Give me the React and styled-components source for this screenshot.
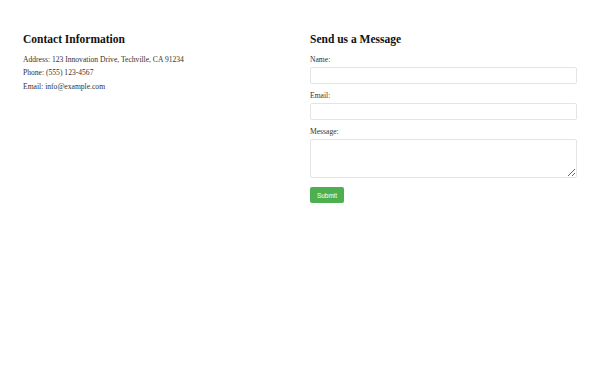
import React from "react";
import styled, { createGlobalStyle } from "styled-components";

const GlobalStyle = createGlobalStyle`
  html, body {
    margin: 0;
    padding: 0;
    background: #ffffff;
  }
  body {
    font-family: "Liberation Serif", "Times New Roman", serif;
    color: #222;
  }
`;

const App = () => {
  return (
    <>
      <GlobalStyle />
      <Page>
        <Column>
          <Heading>Contact Information</Heading>
          <Info>Address: 123 Innovation Drive, Techville, CA 91234</Info>
          <Info>Phone: (555) 123-4567</Info>
          <Info>Email: info@example.com</Info>
        </Column>
        <Column>
          <Heading>Send us a Message</Heading>
          <Form onSubmit={(e) => e.preventDefault()}>
            <Label htmlFor="name">Name:</Label>
            <Input id="name" type="text" />
            <Label htmlFor="email">Email:</Label>
            <Input id="email" type="email" />
            <Label htmlFor="message">Message:</Label>
            <TextArea id="message" />
            <SubmitButton type="submit">Submit</SubmitButton>
          </Form>
        </Column>
      </Page>
    </>
  );
};

const Page = styled.div`
  display: grid;
  grid-template-columns: 1fr 1fr;
  gap: 20px;
  padding: 32px 23px;
`;

const Column = styled.section`
  display: flex;
  flex-direction: column;
`;

const Heading = styled.h2`
  font-size: 11.5px;
  font-weight: bold;
  color: #111;
  margin: 0 0 8.5px;
  line-height: 14px;
`;

const Info = styled.p`
  font-size: 7.6px;
  line-height: 9px;
  margin: 0 0 4.6px;
  color: #333;
`;

const Form = styled.form`
  display: flex;
  flex-direction: column;
  align-items: flex-start;
`;

const Label = styled.label`
  font-size: 7.6px;
  line-height: 9px;
  color: #333;
  margin-bottom: 3px;
`;

const Input = styled.input`
  box-sizing: border-box;
  width: 100%;
  height: 17px;
  border: 1px solid #e4e4e4;
  border-radius: 2px;
  margin: 0 0 7px;
  padding: 2px 4px;
  font-size: 7.5px;
  outline: none;
`;

const TextArea = styled.textarea`
  box-sizing: border-box;
  width: 100%;
  height: 39.5px;
  border: 1px solid #e4e4e4;
  border-radius: 2px;
  margin: 0 0 9px;
  padding: 2px 4px;
  font-size: 7.5px;
  resize: vertical;
  outline: none;
`;

const SubmitButton = styled.button`
  background-color: #4caf50;
  color: #ffffff;
  border: none;
  border-radius: 2px;
  font-family: "Liberation Sans", Arial, sans-serif;
  font-size: 6.4px;
  width: 34px;
  height: 16px;
  padding: 0;
  cursor: pointer;
`;

export default App;
